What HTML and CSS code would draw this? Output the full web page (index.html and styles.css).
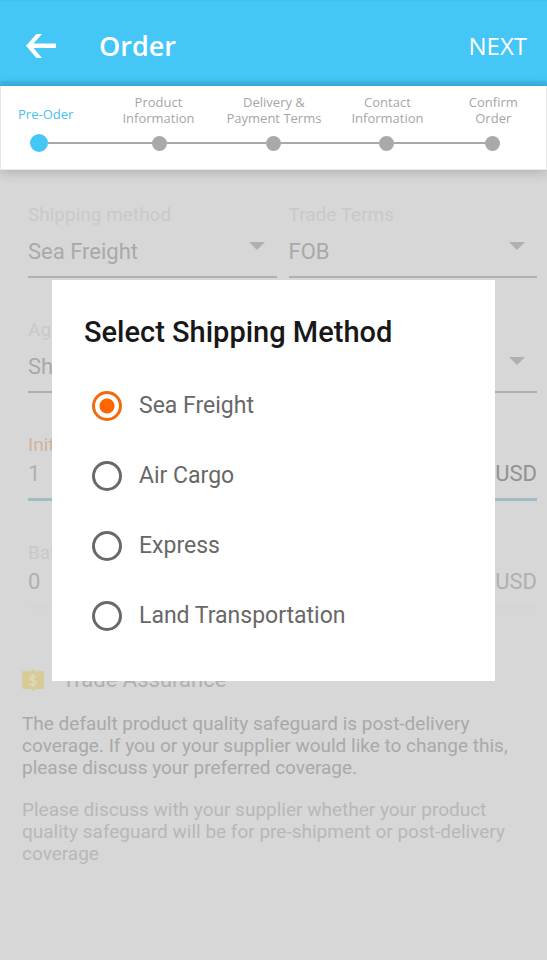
FILE: index.html
```html
<!DOCTYPE html>
<html lang="en">
<head>
<meta charset="utf-8">
<meta name="viewport" content="width=device-width, initial-scale=1">
<title>Order</title>
<link rel="stylesheet" href="styles.css">
</head>
<body>
<header class="top">
  <div class="bar">
    <button class="back" type="button" aria-label="Back">
      <svg width="30" height="26" viewBox="0 0 30 26"><path d="M30 10.500H7.500L16 1h-5.500L0 12.700 10.500 25H16L7.500 15H30z" fill="#fff"/></svg>
    </button>
    <h1 class="title">Order</h1>
    <button class="next" type="button">NEXT</button>
  </div>
  <nav class="steps" aria-label="Order steps">
    <ol class="labels">
      <li class="current">Pre-Oder</li>
      <li>Product<br>Information</li>
      <li>Delivery &amp;<br>Payment Terms</li>
      <li>Contact<br>Information</li>
      <li>Confirm<br>Order</li>
    </ol>
    <div class="track" aria-hidden="true">
      <span class="dot active"></span><span class="line first"></span>
      <span class="dot"></span><span class="line"></span>
      <span class="dot"></span><span class="line"></span>
      <span class="dot"></span><span class="line last"></span>
      <span class="dot"></span>
    </div>
  </nav>
</header>

<main class="page">
  <form class="form">
    <div class="pair">
      <div class="field">
        <label for="method">Shipping method</label>
        <div class="pick"><select id="method"><option>Sea Freight</option></select></div>
      </div>
      <div class="field">
        <label for="terms">Trade Terms</label>
        <div class="pick"><select id="terms"><option>FOB</option></select></div>
      </div>
    </div>
    <div class="field">
      <label for="agreement">Agreement</label>
      <div class="pick"><select id="agreement"><option>Shipment</option></select></div>
    </div>
    <div class="field amount focused">
      <label for="initial">Initial Payment</label>
      <div class="entry"><input id="initial" type="text" value="1"><span>USD</span></div>
    </div>
    <div class="field amount">
      <label for="balance">Balance</label>
      <div class="entry"><input id="balance" type="text" value="0"><span>USD</span></div>
    </div>
  </form>
  <section class="assurance">
    <h2>
      <svg width="22" height="22" viewBox="0 0 22 22"><path d="M0 2Q4 3 5.500 1L8 3 11 0l3 3 2.500-2Q18 3 22 2V18q0 2-2 2h-6l-3 2-3-2H2q-2 0-2-2z" fill="#d9cb98"/><path d="M14 8.500q-1-1.500-3-1.500-2.800 0-2.800 2t2.800 2.300q3 .4 3 2.500T11 16q-2.400 0-3.300-1.600M11 5v13" fill="none" stroke="#e0dac2" stroke-width="1.300"/></svg>
      Trade Assurance
    </h2>
    <p>The default product quality safeguard is post-delivery coverage. If you or your supplier would like to change this, please discuss your preferred coverage.</p>
    <p class="note">Please discuss with your supplier whether your product quality safeguard will be for pre-shipment or post-delivery coverage</p>
  </section>
</main>

<div class="overlay">
  <form class="dialog" role="dialog" aria-labelledby="dialog-title">
    <h2 id="dialog-title">Select Shipping Method</h2>
    <label class="option"><input type="radio" name="shipping" checked>Sea Freight</label>
    <label class="option"><input type="radio" name="shipping">Air Cargo</label>
    <label class="option"><input type="radio" name="shipping">Express</label>
    <label class="option"><input type="radio" name="shipping">Land Transportation</label>
  </form>
</div>
</body>
</html>
```
FILE: styles.css
```css
* { box-sizing: border-box; }

body {
  margin: 0;
  min-height: 100vh;
  background: #d7d7d7;
  color: #b0b0b0;
  font-family: Roboto, sans-serif;
}

h1, h2, p, ol { margin: 0; padding: 0; }
button, input, select { font: inherit; color: inherit; background: none; border: 0; padding: 0; margin: 0; }

.top { font-family: "Open Sans", "Noto Sans", sans-serif; }

.bar {
  display: flex;
  align-items: center;
  height: 86px;
  padding: 6px 20px 0 26px;
  background: linear-gradient(#40bff0 0, #44c6f7 2px, #44c6f7 80px, #3eb8e7 82px, #3eb4e2 86px);
  color: #fff;
}
.back { display: flex; }
.title { flex: 1; margin-left: 43px; font-size: 27px; line-height: 40px; font-weight: 600; }
.next { font-size: 24px; line-height: 40px; }

.steps {
  height: 84px;
  padding-top: 8px;
  background: #fff;
  border: solid #e8e8e8;
  border-width: 0 1px 1px;
  box-shadow: 0 2px 12px rgba(0, 0, 0, .2);
}
.labels {
  display: grid;
  grid-template-columns: 90fr 137fr 93fr 133fr 80fr;
  align-items: center;
  padding-right: 13px;
  list-style: none;
  text-align: center;
  white-space: nowrap;
  font-size: 13px;
  line-height: 16px;
  color: #a6a6a6;
}
.labels .current { color: #44c1ee; padding-top: 8px; }
.track { display: flex; align-items: center; padding: 0 46px 0 29px; margin-top: 8px; }
.dot { width: 15px; height: 15px; border-radius: 50%; background: #a9a9a9; }
.dot.active { width: 18px; height: 18px; background: #44c6f7; }
.line { flex: 98; height: 2px; background: #a9a9a9; }
.line.first { flex-grow: 104; }
.line.last { flex-grow: 91; }

.page { padding: 33px 10px 0 22px; }
.form { padding-left: 6px; }
.pair { display: grid; grid-template-columns: 1fr 1fr; gap: 12px; }
.field { height: 75px; margin-bottom: 40px; border-bottom: 2px solid #b0b0b0; }
.field label { display: block; font-size: 19px; line-height: 24px; color: #c9c9c9; }
.pick { position: relative; margin-top: 9px; }
.pick::after {
  content: "";
  position: absolute;
  top: 6px;
  right: 12px;
  border: solid transparent;
  border-width: 8px 8px 0;
  border-top-color: #b0b0b0;
}
select { width: 100%; height: 30px; appearance: none; font-size: 22px; color: #a9a9a9; }
.amount { height: 68px; border-bottom-width: 3px; }
.entry { display: flex; font-size: 22px; line-height: 30px; margin-top: 2px; }
.entry input { flex: 1; min-width: 0; height: 30px; }
.focused { border-color: #a0bdc6; }
.focused label { color: #ceb49f; }
.focused span { color: #929292; }
.amount:last-child { border-color: #d5d5d5; margin-bottom: 58px; }

.assurance { font-size: 19px; line-height: 22px; }
.assurance h2 { display: flex; align-items: center; gap: 18px; margin-bottom: 20px; font-size: 22px; line-height: 26px; font-weight: 400; }
.assurance p { color: #a9a9a9; margin-bottom: 20px; }
.assurance .note { color: #b7b7b7; }

.overlay { position: fixed; inset: 0; display: grid; align-items: center; padding: 0 52px; }
.dialog { padding: 33px 32px 30px; background: #fff; color: #686868; }
.dialog h2 { margin-bottom: 20px; font-size: 29px; line-height: 38px; font-weight: 500; color: #181818; }
.option { display: flex; align-items: center; gap: 17px; height: 70px; padding-left: 8px; font-size: 23px; }
.option input { appearance: none; width: 30px; height: 30px; border: 3px solid #696969; border-radius: 50%; }
.option input:checked { border-color: #f26a0c; background: radial-gradient(circle, #ff6600 7px, #fff 8px); }
```
